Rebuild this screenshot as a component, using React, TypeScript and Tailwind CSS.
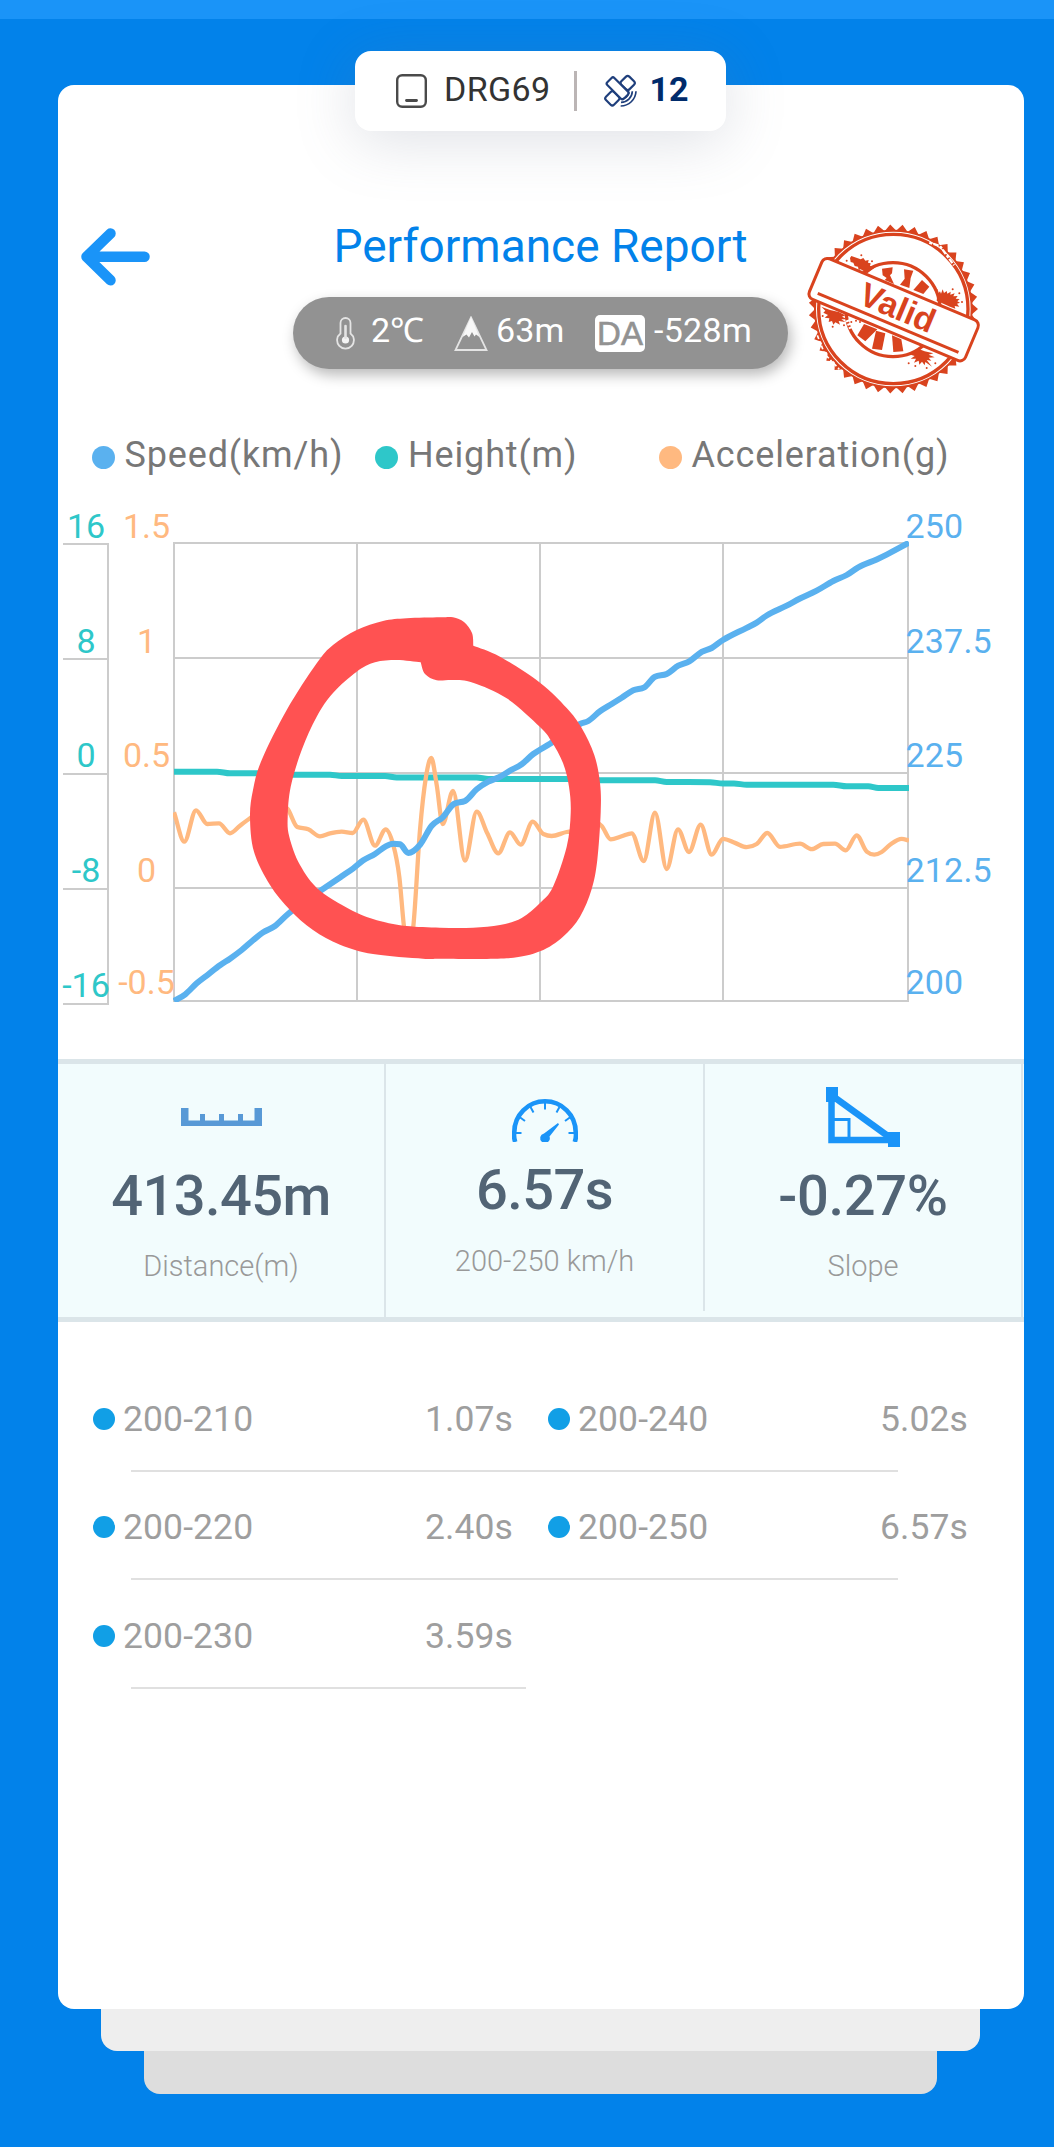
import React from 'react';

type Point = [number, number];

const speedData: Point[] = [
  [174, 1001], [185.3, 994.3], [196.7, 983.3], [208.3, 974.3], [220, 965.3], [230, 958.7], [241.7, 950],
  [253.3, 940], [263.3, 932.3], [275, 926], [288.3, 913.7], [304, 902], [320, 891], [330, 884.3], [341.7, 876.3],
  [353.3, 868.3], [363.3, 860.3], [375, 854], [385.7, 846.3], [393.3, 843.7], [400, 844.3], [408.3, 853], [420, 844.7],
  [431.7, 825.7], [442.7, 817.3], [454.3, 803.7], [465, 801], [476.7, 789.3], [488.3, 781.7], [499, 777.3],
  [510, 770.7], [521.7, 764.3], [533.3, 754], [550, 743.7], [566, 733], [580, 724], [588.3, 721], [600, 711.3],
  [611.7, 704], [621.7, 697.7], [633.3, 690.3], [644.3, 687.3], [655, 676.7], [666.7, 674], [678.3, 665.7],
  [689.3, 661.3], [701.7, 651.9], [711.7, 648], [723, 640], [746.7, 627.8], [756.7, 622.6], [766.7, 615.5],
  [786.7, 605.6], [800, 598.5], [816.7, 590.6], [833.3, 581], [846.7, 575], [858.3, 567.3], [876.7, 559.4],
  [886.7, 554.6], [909, 542.7],
];

const heightData: Point[] = [
  [174, 771.7], [217, 771.7], [230, 773.3], [258, 773.3], [290, 774.7], [330, 774.7], [341.7, 776], [385, 776],
  [396.7, 777.5], [476.7, 777.5], [488.3, 779], [570, 779], [600, 780.3], [655, 780.3], [666.7, 782], [710, 782.2],
  [723, 783.5], [734, 783.5], [746.7, 784.7], [833.3, 784.7], [846.7, 786.3], [868.3, 786.3], [878.3, 787.9],
  [909, 787.9],
];

const accelerationData: Point[] = [
  [174, 812.3], [184.3, 841.7], [196, 810.3], [207.3, 824], [219, 823.3], [230, 833.3], [240, 825.7],
  [249.3, 818.7], [262, 812], [275, 830], [286, 808], [297.3, 827], [308.3, 829.3], [320, 836.3], [330, 833.3],
  [341.7, 831.7], [352.7, 833], [363.3, 819.7], [375, 845.7], [385.7, 829.3], [393.3, 845], [399.3, 876.7],
  [404, 926.7], [408.5, 950], [413.3, 926.7], [420, 830], [426, 776.7], [431.3, 758], [436.7, 785], [442.7, 824],
  [453, 791], [465, 860.7], [476.7, 811.7], [487.3, 833.3], [498.3, 853.3], [510, 832.3], [520.7, 844.7],
  [532.7, 821.7], [543.3, 834], [551.7, 836], [566.7, 832], [578, 831], [590, 820], [601.7, 826], [610.7, 839.3],
  [621.7, 836.3], [631.7, 833.3], [643.7, 861], [655, 812.7], [666.7, 869], [678, 829.3], [689, 852],
  [700.7, 824.7], [711.7, 854.7], [723, 838.9], [735, 842.9], [746.7, 847.2], [756.7, 844], [767.3, 833],
  [780, 846.8], [800, 843.7], [811.7, 849.2], [823.3, 844], [835, 843.7], [845.7, 850.4], [856.7, 835.3],
  [866.7, 851.6], [874.3, 854.7], [881.7, 852], [890, 844.8], [901.7, 838.9], [909, 840.5],
];

// Edges of the hand drawn marker stroke
const markerOuter: Point[] = [
  [473.3, 645.7], [500, 656.7], [540, 682.7], [566.7, 708], [581.7, 728], [594.3, 755], [600, 783], [600.7, 812],
  [597.3, 860], [591.7, 889], [580, 916.7], [563, 936.7], [540, 951.3], [506.7, 958.3], [440, 958.7], [423, 958.7],
  [373, 954], [340, 944.7], [313, 930], [290, 910], [270, 885], [254, 851.7], [250, 816.7], [253, 790],
  [261.7, 760], [286.7, 710], [316.7, 663.3], [333, 645], [356.7, 630], [383, 621], [406.7, 618.3], [440, 617.3],
  [453, 617.3], [464, 622], [472, 633], [473.3, 645.7],
];

const markerInner: Point[] = [
  [420.7, 662.3], [425, 674], [436.7, 680.3], [453, 680], [473, 682.7], [506.7, 698.3], [540, 727], [551.7, 741.7],
  [563, 763], [569, 786.7], [570.7, 813], [566.7, 846.7], [553, 886.7], [540, 903], [521.7, 918], [500, 925],
  [473, 927.7], [440, 927.7], [406.7, 926], [383, 921.7], [356.7, 912.7], [320, 890.7], [300, 865], [289.3, 836.7],
  [287.7, 816.7], [290.7, 786.7], [301.7, 750], [316.7, 716.7], [333, 693], [356.7, 671.7], [375, 662.3],
  [396.7, 660], [420.7, 662.3],
];

// Monotone cubic interpolation, so that the curve never overshoots a sample
const monotonePath = (points: Point[]): string => {
  const n = points.length;
  const slopes: number[] = [];
  for (let i = 0; i < n - 1; i++) {
    slopes.push((points[i + 1][1] - points[i][1]) / (points[i + 1][0] - points[i][0]));
  }
  const tangents = points.map((_, i) => {
    if (i === 0) return slopes[0];
    if (i === n - 1) return slopes[n - 2];
    const a = slopes[i - 1];
    const b = slopes[i];
    if (a * b <= 0) return 0;
    return Math.sign(a) * Math.min(2 * Math.abs(a), 2 * Math.abs(b), Math.abs(a + b) / 2);
  });
  let d = `M${points[0][0]} ${points[0][1]}`;
  for (let i = 0; i < n - 1; i++) {
    const [x0, y0] = points[i];
    const [x1, y1] = points[i + 1];
    const h = (x1 - x0) / 3;
    d += `C${x0 + h} ${y0 + tangents[i] * h} ${x1 - h} ${y1 - tangents[i + 1] * h} ${x1} ${y1}`;
  }
  return d;
};

// Catmull-Rom spline through all points
const splinePath = (points: Point[]): string => {
  let d = `M${points[0][0]} ${points[0][1]}`;
  for (let i = 0; i < points.length - 1; i++) {
    const p0 = points[Math.max(0, i - 1)];
    const p1 = points[i];
    const p2 = points[i + 1];
    const p3 = points[Math.min(points.length - 1, i + 2)];
    d += `C${p1[0] + (p2[0] - p0[0]) / 6} ${p1[1] + (p2[1] - p0[1]) / 6} ${p2[0] - (p3[0] - p1[0]) / 6} ${p2[1] - (p3[1] - p1[1]) / 6} ${p2[0]} ${p2[1]}`;
  }
  return d + 'Z';
};

const legend = [
  { label: 'Speed(km/h)', dot: 'bg-[#5ab1ef]' },
  { label: 'Height(m)', dot: 'bg-[#2ec7c9]' },
  { label: 'Acceleration(g)', dot: 'bg-[#ffb980]' },
];

const heightTicks = [
  { label: '16', y: 537.5 },
  { label: '8', y: 652.5 },
  { label: '0', y: 767 },
  { label: '-8', y: 882 },
  { label: '-16', y: 997 },
];

const accelerationTicks = [
  { label: '1.5', y: 537.5 },
  { label: '1', y: 652.5 },
  { label: '0.5', y: 767 },
  { label: '0', y: 882 },
  { label: '-0.5', y: 994 },
];

const speedTicks = [
  { label: '250', y: 537.5 },
  { label: '237.5', y: 652.5 },
  { label: '225', y: 767 },
  { label: '212.5', y: 882 },
  { label: '200', y: 994 },
];

const splits = [
  [{ range: '200-210', time: '1.07s' }, { range: '200-240', time: '5.02s' }],
  [{ range: '200-220', time: '2.40s' }, { range: '200-250', time: '6.57s' }],
  [{ range: '200-230', time: '3.59s' }],
];

const DeviceIcon = () => (
  <svg className="h-[34px] w-[31px]" viewBox="0 0 31 34" fill="none" stroke="#4a4a4a">
    <rect x="1.200" y="1.200" width="28.600" height="31.600" rx="5" strokeWidth="2.400" />
    <path d="M10.500 26.500h10" strokeWidth="2.800" strokeLinecap="round" />
  </svg>
);

const SatelliteIcon = () => (
  <svg className="h-[34px] w-[34px]" viewBox="822 102 102 102" fill="none" stroke="#1f3f7c" strokeWidth="6.500">
    <rect x="-17" y="-17" width="34" height="34" rx="7" transform="translate(893 129) rotate(45)" />
    <rect x="-17" y="-17" width="34" height="34" rx="7" transform="translate(847 175) rotate(45)" />
    <rect x="-35" y="-15" width="70" height="30" rx="6" fill="#fff" transform="translate(863 145) rotate(45)" />
    <path d="M918 154a46 46 0 0 1-46 44M907 154a34 34 0 0 1-34 33M896 158a24 24 0 0 1-21 19" strokeWidth="5" />
  </svg>
);

const BackArrow = () => (
  <svg className="h-[58px] w-[70px]" viewBox="81 228.500 70 58" fill="none" stroke="#1a94f8" strokeWidth="10.500" strokeLinecap="round" strokeLinejoin="round">
    <path d="M110.500 234L86.500 257.300L110.500 280.800M90 257.300H144.500" />
    <path d="M92 250V264.500L85 257.300Z" fill="#1a94f8" strokeWidth="4" />
  </svg>
);

const ThermometerIcon = () => (
  <svg className="h-[33px] w-[19px]" viewBox="0 0 19 33" fill="none" stroke="#e4e4e4" strokeWidth="1.800">
    <path d="M4.500 16.500V6a5 5 0 0 1 10 0v10.500a8.400 8.400 0 1 1-10 0Z" />
    <circle cx="9.500" cy="23" r="3.600" fill="#f4f4f4" stroke="none" />
    <path d="M9.500 9v12" strokeWidth="2.600" strokeLinecap="round" />
  </svg>
);

const MountainIcon = () => (
  <svg className="h-[35px] w-[34px]" viewBox="0 0 34 35">
    <path d="M17 1.500L32.500 34H1.500Z" fill="none" stroke="#e4e4e4" strokeWidth="1.800" />
    <path d="M17 1L25.500 21L22 18.500L20.500 20.500L18 16L15 21.500L12.500 18.500L8.500 21Z" fill="#f8f8f8" />
  </svg>
);

const grunge = [
  'M180 144L184 138L212 148L220 144L226 152L236 150L234 158L242 160L240 168L258 170L232 190L212 178L206 180L204 170L194 168L190 158L182 156Z',
  'M440 272L442 254L450 244L453 251L458 238L462 249L470 243L472 251L482 245L481 254L494 250L490 259L503 258L497 266L509 267L502 274L510 278L501 281L508 290L494 288L496 296L480 290Z',
  'M94 290L120 300L146 306L166 316L156 320L172 328L154 328L166 336L146 333L150 344L136 337L130 344L126 333L116 336L118 325L104 323L114 315L100 308L106 302Z',
  'M372 424L384 416L404 424L430 430L416 434L434 442L416 443L424 452L410 450L426 470L406 456L404 466L396 455L388 464L386 452L372 458L378 446L362 446L374 438L362 434Z',
];

const specks = [
  [214, 136], [246, 154], [170, 152], [516, 276], [488, 238], [440, 240], [508, 250], [128, 350], [98, 318],
  [162, 346], [184, 336], [198, 332], [210, 336], [356, 460], [436, 460], [410, 474], [376, 468],
];

const teeth = Array.from({ length: 43 }, (_, i) => {
  const a = ((i - 0.25) / 43) * Math.PI * 2 - Math.PI / 2;
  const w = (Math.PI / 43) * 1.02;
  const at = (r: number, t: number) => `${(310 + r * Math.cos(t)).toFixed(1)} ${(297 + r * Math.sin(t)).toFixed(1)}`;
  return `M${at(235, a - w)}L${at(254, a)}L${at(235, a + w)}Z`;
}).join('');

const ValidStamp = () => (
  <svg className="h-[176px] w-[176px]" viewBox="48 36 528 528" fill="#d9431e">
    <path d={teeth} />
    <circle cx="310" cy="297" r="235" fill="none" stroke="#d9431e" strokeWidth="6" />
    <circle cx="310" cy="297" r="224" fill="none" stroke="#d9431e" strokeWidth="10" />
    {/* worn spots of the outer ring */}
    <path d="M418 98L450 108L492 166" fill="none" stroke="#fff" strokeWidth="7" strokeDasharray="9 4 16 5" />
    <path d="M82 376L104 432L158 488" fill="none" stroke="#fff" strokeWidth="5" strokeDasharray="12 7 5 9" />
    <circle cx="309" cy="299" r="141" fill="none" stroke="#d9431e" strokeWidth="10" />
    <path d="M172 330L184 360" fill="none" stroke="#fff" strokeWidth="11" strokeDasharray="6 5" />
    <path d="M276 176L308 172L306 190L300 196L312 222L284 210L290 204L278 196Z" />
    <path d="M342 178L370 182L362 204L358 234L330 224L344 206Z" />
    <path d="M396 210L418 230L400 252L370 240Z" />
    <path d="M222 342L262 358L226 394L202 376Z" />
    <path d="M258 362L286 370L276 420L246 416Z" />
    <path d="M306 376L334 388L340 424L310 426Z" />
    {grunge.map(d => (
      <path key={d} d={d} />
    ))}
    {specks.map(([x, y]) => (
      <circle key={`${x}-${y}`} cx={x} cy={y} r="3" />
    ))}
    <g transform="translate(311 299) rotate(22.8)">
      <rect x="-254" y="-66" width="508" height="132" rx="18" fill="#fff" stroke="#d9431e" strokeWidth="9" />
      <path d="M-229 43H229" stroke="#d9431e" strokeWidth="9" />
      <text x="9" y="24" textAnchor="middle" className="font-['Liberation_Sans',sans-serif] text-[101px] font-bold">Valid</text>
    </g>
  </svg>
);

const RulerIcon = () => (
  <svg className="h-[18px] w-[81px]" viewBox="0 0 81 18" fill="#5899d6">
    <path d="M0 0H7.500V12.500H19V6H24V12.500H38V6H43V12.500H57V6H62V12.500H73.500V0H81V18H0Z" />
  </svg>
);

const GaugeIcon = () => (
  <svg className="h-[43px] w-[66px]" viewBox="0 0 66 43" fill="none" stroke="#1a94f8">
    <path d="M3.200 43C1.500 38 2.300 33 2.300 33A30.700 30.700 0 0 1 63.700 33C63.700 33 64.500 38 62.800 43" strokeWidth="4.600" />
    <path d="M33 3V10.500M18.500 8L21.500 13.500M47.500 8L44.500 13.500M7.500 18L13 22M58.500 18L53 22M2 34H9.500M64 34H56.500" strokeWidth="2" />
    <path d="M46 24L47 25.500L37.500 37.500A4.800 4.800 0 0 1 36 43H30A4.800 4.800 0 0 1 32 34.500Z" fill="#1a94f8" stroke="none" />
  </svg>
);

const SlopeIcon = () => (
  <svg className="h-[60px] w-[74px]" viewBox="0 0 74 60" fill="none" stroke="#1a94f8">
    <path d="M5.500 8V53H66" strokeWidth="6.500" />
    <path d="M8 10L66 52" strokeWidth="6.500" />
    <path d="M8 32.500H23V51" strokeWidth="3" />
    <path d="M0 0H12V15H0ZM62 45H74V60H62Z" fill="#1a94f8" stroke="none" />
  </svg>
);

const PerformanceChart = () => (
  <svg className="block h-[583px] w-[966px] text-[34px]" viewBox="58 476 966 583">
    <defs>
      <clipPath id="plot">
        <rect x="173" y="541" width="736" height="461" />
      </clipPath>
    </defs>

    {/* Grid and the detached height axis */}
    <g stroke="#ccc" strokeWidth="2" fill="none">
      <path d="M174 542V1002M357 542V1002M540 542V1002M723 542V1002M908 542V1002" />
      <path d="M173 543H909M173 658H909M173 773H909M173 888H909M173 1001H909" />
      <path d="M108 543V1005M63 544H109M63 659H109M63 774H109M63 889H109M63 1004H109" />
    </g>

    <g fill="#2ec7c9" textAnchor="middle">
      {heightTicks.map(t => <text key={t.label} x="86" y={t.y}>{t.label}</text>)}
    </g>
    <g fill="#ffb980" textAnchor="middle">
      {accelerationTicks.map(t => <text key={t.label} x="146.500" y={t.y}>{t.label}</text>)}
    </g>
    <g fill="#5ab1ef" className="tracking-[0.2px]">
      {speedTicks.map(t => <text key={t.label} x="905.500" y={t.y}>{t.label}</text>)}
    </g>

    <g clipPath="url(#plot)" fill="none" strokeLinejoin="round">
      <path d={monotonePath(heightData)} stroke="#2ec7c9" strokeWidth="6" />
      <path d={monotonePath(accelerationData)} stroke="#ffb980" strokeWidth="4.300" />
      <path d={monotonePath(speedData)} stroke="#5ab1ef" strokeWidth="6" />
    </g>

    <path d={splinePath(markerOuter) + splinePath(markerInner)} fill="#ff5252" fillRule="evenodd" />
  </svg>
);

const App: React.FC = () => {
  return (
    <div className="relative h-[2147px] w-full overflow-hidden bg-[#0282ea] font-[Roboto,sans-serif]">
      <div className="h-[19px] bg-[#1a94f8]"></div>

      <div className="ml-[58px] mt-[66px] flex h-[1924px] w-[966px] flex-col overflow-hidden rounded-2xl bg-white pt-[134px]">
        <header className="flex h-[185px] shrink-0">
          <div className="w-[235px] pl-[23px] pt-[9px]">
            <BackArrow />
          </div>
          <div className="w-[495px]">
            <h1 className="text-center text-[46px] leading-[54px] text-[#0282ea]">Performance Report</h1>
            <div className="mt-[24px] flex h-[72px] items-center rounded-full bg-[#929292] pl-[43px] text-[34px] leading-[40px] text-white shadow-[3px_6px_14px_rgba(0,0,0,0.28)]">
              <ThermometerIcon />
              <span className="mb-1.5 ml-4 w-[83px] whitespace-nowrap">2℃</span>
              <MountainIcon />
              <span className="mb-1.5 ml-2 w-[99px] tracking-[0.2px]">63m</span>
              <span className="flex h-[37px] w-[50px] items-center justify-center rounded-[5px] bg-white pt-0.5 font-['Liberation_Sans',sans-serif] text-[33px] text-[#929292] [-webkit-text-stroke:0.6px_#929292]">DA</span>
              <span className="mb-1.5 ml-[9px] tracking-[0.3px]">-528m</span>
            </div>
          </div>
          <div className="pl-[18px] pt-[3px]">
            <ValidStamp />
          </div>
        </header>

        <div className="mt-[30px] grid h-[42px] shrink-0 grid-cols-[283.5px_283.5px_1fr] pl-[33.5px] text-[36px] leading-[42px] tracking-[0.85px] text-[#777]">
          {legend.map(item => (
            <div key={item.label} className="flex items-center">
              <span className={`mt-1 h-[23px] w-[23px] rounded-full ${item.dot}`}></span>
              <span className="ml-2.5">{item.label}</span>
            </div>
          ))}
        </div>

        <PerformanceChart />

        <div className="flex h-[263px] shrink-0 border-y-[5px] border-[#dbe5e9] bg-[#f2fcfd]">
          <div className="flex w-[328px] flex-col items-center border-r-2 border-[#dbe5e9] pt-[44px]">
            <RulerIcon />
            <div className="mt-[37px] text-[56px] font-medium leading-[66px] tracking-[-0.6px] text-[#526475]">413.45m</div>
            <div className="mt-[20px] text-[29px] font-light leading-[34px] text-[#999]">Distance(m)</div>
          </div>
          <div className="flex h-[247px] w-[319px] flex-col items-center border-r-2 border-[#dbe5e9] pt-[35px]">
            <GaugeIcon />
            <div className="mt-[15px] text-[56px] font-medium leading-[66px] tracking-[-0.6px] text-[#526475]">6.57s</div>
            <div className="mt-[21px] text-[29px] font-light leading-[34px] text-[#999]">200-250 km/h</div>
          </div>
          <div className="flex w-[318px] flex-col items-center border-r-2 border-[#dbe5e9] pt-[23px]">
            <SlopeIcon />
            <div className="mt-[16px] text-[56px] font-medium leading-[66px] tracking-[-0.3px] text-[#526475]">-0.27%</div>
            <div className="mt-[20px] text-[29px] font-light leading-[34px] text-[#999]">Slope</div>
          </div>
        </div>

        <div className="mt-[76px] pl-[35px] text-[35.5px] leading-[42px] tracking-[0.1px] text-[#9e9e9e]">
          {splits.map(row => (
            <div key={row[0].range} className="h-[108.3px]">
              <div className="flex gap-[35px]">
                {row.map(split => (
                  <div key={split.range} className="flex w-[420px] items-center">
                    <span className="h-[22px] w-[22px] rounded-full bg-[#119fe6]"></span>
                    <span className="ml-2">{split.range}</span>
                    <span className="ml-auto">{split.time}</span>
                  </div>
                ))}
              </div>
              <div className={`ml-[38px] mt-[30px] h-0.5 bg-[#e0e0e0] ${row.length > 1 ? 'w-[767px]' : 'w-[395px]'}`}></div>
            </div>
          ))}
        </div>
      </div>

      {/* Stacked sheets under the card */}
      <div className="ml-[101px] h-[42px] w-[879px] rounded-b-2xl bg-[#eee]"></div>
      <div className="ml-[144px] h-[43px] w-[793px] rounded-b-2xl bg-[#ddd]"></div>

      <div className="absolute left-[355px] top-[51px] flex h-[80px] w-[371px] items-center rounded-2xl bg-white pl-[41px] text-[34px] leading-[40px] shadow-[0_10px_60px_rgba(110,120,140,0.22)]">
        <DeviceIcon />
        <span className="mb-1 ml-[17px] tracking-[0.35px] text-[#333]">DRG69</span>
        <span className="ml-[24px] h-[40px] w-[3px] bg-[#bbb5b5]"></span>
        <span className="ml-[27px]">
          <SatelliteIcon />
        </span>
        <span className="mb-1 ml-[11px] font-bold text-[#002b6b]">12</span>
      </div>
    </div>
  );
};

export default App;
